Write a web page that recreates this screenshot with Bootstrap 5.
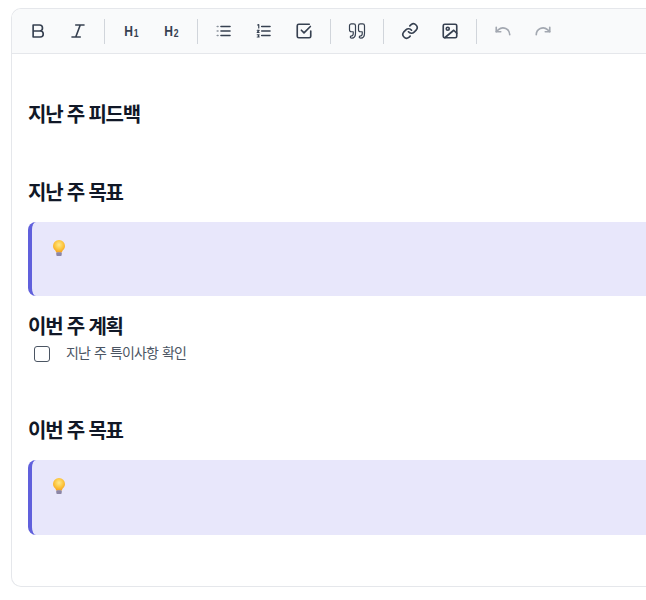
<!DOCTYPE html>
<html lang="ko">
<head>
  <meta charset="UTF-8" />
  <meta name="viewport" content="width=device-width, initial-scale=1" />
  <title>주간 회고</title>
  <link href="https://cdn.jsdelivr.net/npm/bootstrap@5.3.3/dist/css/bootstrap.min.css" rel="stylesheet" />
  <style>
    html, body { height: 600px; overflow: hidden; }
    body { background: #fff; padding: 8px 0 0 11px; font-family: "Noto Sans CJK KR", sans-serif; color: #111827; }
    .editor-box { width: 635px; height: 579px; border: 1px solid #e5e7eb; border-right: 0; border-radius: 10px 0 0 10px; overflow: hidden; }
    .editor-bar { height: 45px; background: #f9fafb; border-bottom: 1px solid #e5e7eb; padding-left: 10px; gap: 8px; }
    .tool-btn { width: 32px; height: 32px; color: #374151; }
    .tool-btn svg { width: 18px; height: 18px; fill: none; stroke: currentColor; stroke-width: 2.2; stroke-linecap: round; stroke-linejoin: round; }
    .tool-btn svg.tool-quote { stroke-width: 1.6; }
    .tool-head { font-family: "Liberation Sans", sans-serif; font-weight: 700; font-size: 14px; line-height: 1; transform: scaleX(.86); }
    .tool-head sub { font-size: 10px; bottom: -1px; margin-left: 1px; }
    .tool-off { color: #a3a8b1; }
    .tool-sep { width: 1px; height: 25px; background: #d1d5db; margin: 0 2px; }
    .editor-body { padding: 0 0 0 16px; }
    .sec-title { font-size: 20px; font-weight: 700; line-height: 28px; letter-spacing: -1.2px; margin: 0; color: #111827; }
    .gap-feedback { padding-top: 46px; }
    .gap-lastgoal { padding-top: 50px; }
    .gap-plan { padding-top: 16px; }
    .gap-goal { padding-top: 54px; }
    .tip-box { height: 74px; background: #e8e7fb; border-left: 4px solid #6060dc; border-radius: 8px 0 0 8px; padding: 18px 21px; }
    .tip-tall { height: 75px; }
    .tip-box svg { width: 12px; height: 16px; display: block; }
    .task-check { width: 16px; height: 16px; border: 1px solid #4b5563; border-radius: 3px; margin: 6px 0 0 6px; }
    .task-text { font-size: 14px; line-height: 20px; letter-spacing: -.9px; word-spacing: 1px; color: #4b5563; margin: 2px 0 0 16px; }
  </style>
</head>
<body>

<svg width="0" height="0" class="position-absolute">
  <defs>
    <radialGradient id="bulbGlow" cx="50%" cy="38%" r="60%">
      <stop offset="0" stop-color="#ffe88a"/>
      <stop offset=".6" stop-color="#fcc63f"/>
      <stop offset="1" stop-color="#f5a524"/>
    </radialGradient>
    <symbol id="bulb" viewBox="0 0 12 16">
      <path d="M6 0a6 6 0 0 0-6 6c0 2.200 1.300 3.300 2.300 4.600.5.700.7 1.200.7 1.900h6c0-.7.2-1.200.7-1.900C10.700 9.300 12 8.200 12 6a6 6 0 0 0-6-6z" fill="url(#bulbGlow)"/>
      <rect x="3.300" y="12.300" width="5.400" height="3.700" rx="1" fill="#8c86a6"/>
    </symbol>
  </defs>
</svg>

<div class="editor-box">
  <div class="editor-bar d-flex align-items-center">
    <div class="tool-btn d-flex align-items-center justify-content-center"><svg viewBox="0 0 24 24"><path d="M5.500 4h8.500a4 4 0 0 1 0 8H5.500zM5.500 12h9.500a4 4 0 0 1 0 8H5.500z"/></svg></div>
    <div class="tool-btn d-flex align-items-center justify-content-center"><svg viewBox="0 0 24 24"><path d="M9 4h11M4 20h11M15 4L9 20"/></svg></div>
    <div class="tool-sep"></div>
    <div class="tool-btn d-flex align-items-center justify-content-center"><span class="tool-head">H<sub>1</sub></span></div>
    <div class="tool-btn d-flex align-items-center justify-content-center"><span class="tool-head">H<sub>2</sub></span></div>
    <div class="tool-sep"></div>
    <div class="tool-btn d-flex align-items-center justify-content-center"><svg viewBox="0 0 24 24"><path d="M8 6h12M8 12h12M8 18h12"/><path d="M3 6h1M3 12h1M3 18h1" stroke="#8b929c"/></svg></div>
    <div class="tool-btn d-flex align-items-center justify-content-center"><svg viewBox="0 0 24 24"><path d="M9 6h11M9 12h11M9 18h11"/><path d="M3.500 4l1.500-.5V8M3 11h2.500L3 14h2.500M3 17h2.500l-1 1.500 1 1.500H3" stroke-width="1.600"/></svg></div>
    <div class="tool-btn d-flex align-items-center justify-content-center"><svg viewBox="0 0 24 24"><path d="M21 12v7a2 2 0 0 1-2 2H5a2 2 0 0 1-2-2V5a2 2 0 0 1 2-2h14M8.500 11l3.500 3.500 8.500-8.500"/></svg></div>
    <div class="tool-sep"></div>
    <div class="tool-btn d-flex align-items-center justify-content-center"><svg class="tool-quote" viewBox="0 0 24 24"><path d="M2 5a2.500 2.500 0 0 1 2.500-2.500h3A2.500 2.500 0 0 1 10 5v10c0 4-2 6.500-5 6.500-1.200 0-2-.7-2-1.600 0-1 .9-1.500 2-1.500 1.200 0 2-1.300 2-3.400V13H4.500A2.500 2.500 0 0 1 2 10.500z"/><path d="M14 5a2.500 2.500 0 0 1 2.500-2.500h3A2.500 2.500 0 0 1 22 5v10c0 4-2 6.500-5 6.500-1.200 0-2-.7-2-1.600 0-1 .9-1.500 2-1.500 1.200 0 2-1.300 2-3.400V13h-2.500a2.500 2.500 0 0 1-2.500-2.500z"/></svg></div>
    <div class="tool-sep"></div>
    <div class="tool-btn d-flex align-items-center justify-content-center"><svg viewBox="0 0 24 24"><path d="M10 13a5 5 0 0 0 7.500.5l3-3a5 5 0 0 0-7-7l-1.700 1.700"/><path d="M14 11a5 5 0 0 0-7.500-.5l-3 3a5 5 0 0 0 7 7l1.700-1.700"/></svg></div>
    <div class="tool-btn d-flex align-items-center justify-content-center"><svg viewBox="0 0 24 24"><rect x="3" y="3" width="18" height="18" rx="2"/><circle cx="9" cy="9" r="2"/><path d="M21 15l-4-4L5 21"/></svg></div>
    <div class="tool-sep"></div>
    <div class="tool-btn tool-off d-flex align-items-center justify-content-center"><svg viewBox="0 0 24 24"><path d="M3 7v6h6"/><path d="M21 17a9 9 0 0 0-15-6.700L3 13"/></svg></div>
    <div class="tool-btn tool-off d-flex align-items-center justify-content-center"><svg viewBox="0 0 24 24"><path d="M21 7v6h-6"/><path d="M3 17a9 9 0 0 1 15-6.700L21 13"/></svg></div>
  </div>

  <div class="editor-body">
    <h2 class="sec-title gap-feedback">지난 주 피드백</h2>
    <h2 class="sec-title gap-lastgoal">지난 주 목표</h2>
    <div class="tip-box mt-3">
      <svg><use href="#bulb"/></svg>
    </div>
    <h2 class="sec-title gap-plan">이번 주 계획</h2>
    <div class="d-flex">
      <div class="task-check"></div>
      <div class="task-text">지난 주 특이사항 확인</div>
    </div>
    <h2 class="sec-title gap-goal">이번 주 목표</h2>
    <div class="tip-box tip-tall mt-3">
      <svg><use href="#bulb"/></svg>
    </div>
  </div>
</div>

<script src="https://cdn.jsdelivr.net/npm/bootstrap@5.3.3/dist/js/bootstrap.bundle.min.js"></script>
</body>
</html>
